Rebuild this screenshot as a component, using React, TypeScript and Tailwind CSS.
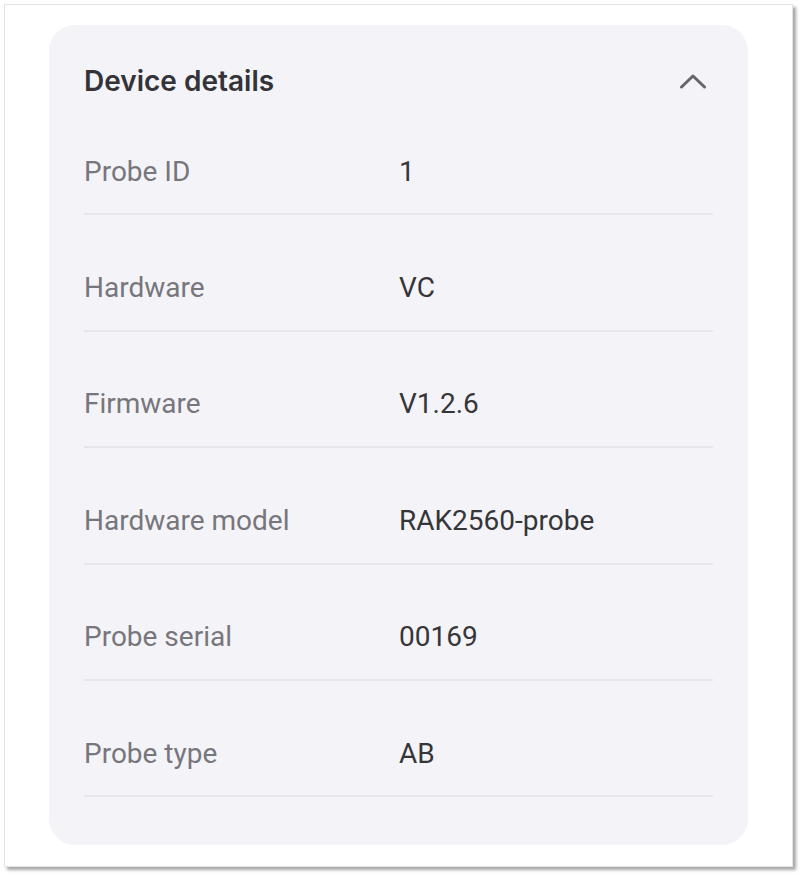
const rows = [
  { label: "Probe ID", value: "1" },
  { label: "Hardware", value: "VC" },
  { label: "Firmware", value: "V1.2.6" },
  { label: "Hardware model", value: "RAK2560-probe" },
  { label: "Probe serial", value: "00169" },
  { label: "Probe type", value: "AB" },
]

export default function App() {
  return (
    <div className="w-[801px] h-[876px] bg-white p-1 font-['Roboto',sans-serif]">
      <div className="w-[789px] h-[863px] bg-white border border-[#e4e4e4] shadow-[3px_3px_3px_rgba(0,0,0,0.35)] px-[44px] pt-[20px]">
        <div className="bg-[#f4f4f8] rounded-[26px] h-[820px] pl-[35px] pr-[35px]">
          <div className="flex items-center justify-between h-[74px] pt-[38px]">
            <h2 className="text-[28px] leading-[34px] font-semibold text-[#333338] font-['Inter',sans-serif]">
              Device details
            </h2>
            <svg width="28" height="16" viewBox="0 0 28 16" className="mr-[6px]">
              <path
                d="M2.5 14 L14 3 L25.5 14"
                fill="none"
                stroke="#66656b"
                strokeWidth="3"
                strokeLinecap="round"
                strokeLinejoin="round"
              />
            </svg>
          </div>
          {rows.map((row) => (
            <div
              key={row.label}
              className="flex items-center h-[116.4px] pt-[31px] border-b-2 border-[#e6e6eb] text-[28px]"
            >
              <div className="w-[315px] text-[#77767c]">{row.label}</div>
              <div className="text-[#363639]">{row.value}</div>
            </div>
          ))}
        </div>
      </div>
    </div>
  )
}
